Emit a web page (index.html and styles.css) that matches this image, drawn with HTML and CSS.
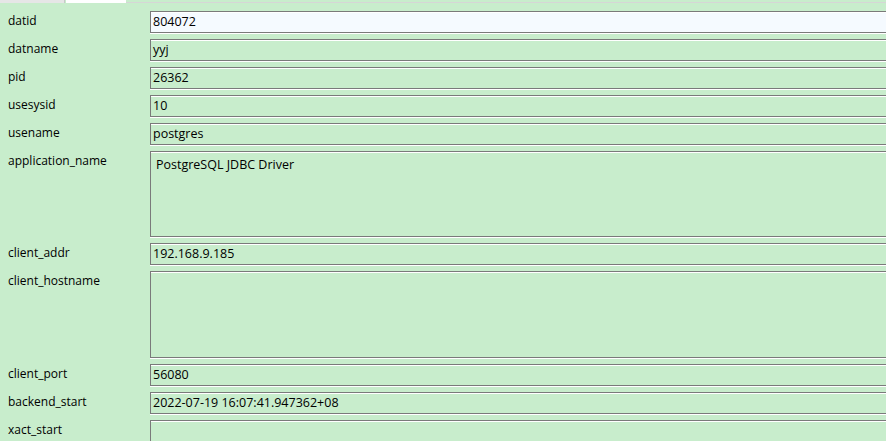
FILE: index.html
```html
<!DOCTYPE html>
<html>
<head>
<meta charset="utf-8">
<link rel="stylesheet" href="styles.css">
</head>
<body>
<div class="tabs">
  <div class="tab tab-a"></div>
  <div class="tab tab-b"></div>
  <div class="tab-rest"></div>
</div>
<div class="form">
  <div class="label">datid</div><div class="box focus">804072</div>
  <div class="label">datname</div><div class="box">yyj</div>
  <div class="label">pid</div><div class="box">26362</div>
  <div class="label">usesysid</div><div class="box">10</div>
  <div class="label">usename</div><div class="box">postgres</div>
  <div class="label">application_name</div><div class="box area">PostgreSQL JDBC Driver</div>
  <div class="label">client_addr</div><div class="box">192.168.9.185</div>
  <div class="label">client_hostname</div><div class="box area tall"></div>
  <div class="label">client_port</div><div class="box">56080</div>
  <div class="label">backend_start</div><div class="box">2022-07-19 16:07:41.947362+08</div>
  <div class="label">xact_start</div><div class="box"></div>
</div>
</body>
</html>
```
FILE: styles.css
```css
html, body {
  margin: 0;
  padding: 0;
  width: 886px;
  height: 441px;
  overflow: hidden;
  background: #c8edcc;
  font-family: "Open Sans", "Noto Sans", sans-serif;
  font-size: 12px;
  color: #000;
}
.tabs {
  display: flex;
  height: 3px;
}
.tab-a {
  width: 64px;
  background: #e6e6e6;
  border-right: 1px solid #c8c8c8;
}
.tab-b {
  width: 60px;
  margin-left: 1px;
  background: #ffffff;
}
.tab-rest {
  flex: 1;
  border-bottom: 1px solid #d6d6d6;
}
.form {
  display: grid;
  grid-template-columns: 150px 760px;
  row-gap: 6px;
  padding-top: 8px;
}
.label {
  padding-left: 8px;
  padding-top: 1px;
  line-height: 18px;
}
.box {
  box-sizing: border-box;
  height: 22px;
  border: 1px solid #7a7a7a;
  box-shadow: 0 1px 0 #ffffff, inset 0 1px 0 #ffffff;
  padding: 0 0 0 2px;
  font-size: 12.5px;
  line-height: 20px;
  white-space: nowrap;
}
.box.focus {
  background: #f5faff;
}
.box.area {
  height: 86px;
  padding: 4px 0 0 5px;
  line-height: 18px;
}
.box.area.tall {
  height: 87px;
}
```
